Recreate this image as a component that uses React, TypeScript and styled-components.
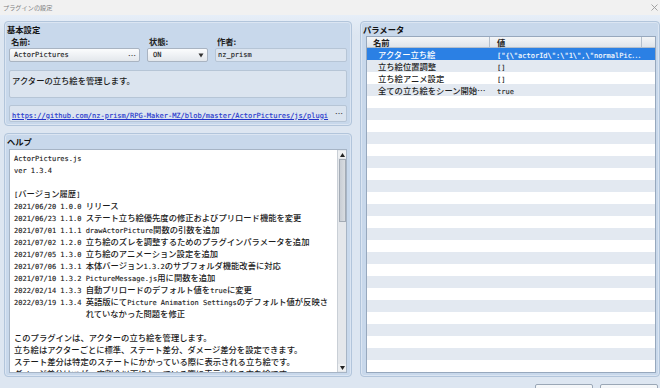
import React from "react";
import styled, { createGlobalStyle, css } from "styled-components";

const GlobalStyle = createGlobalStyle`
  html, body {
    margin: 0;
    padding: 0;
    background: #dde6f1;
  }
  body {
    font-family: "Noto Sans CJK JP", "DejaVu Sans", sans-serif;
    font-size: 8.3px;
    font-weight: 500;
    color: #1a1a1a;
  }
  * {
    box-sizing: border-box;
  }
`;

// 半角部分だけ等幅フォントにする
const LATIN = /([\x20-\x7e]+)/;

function Mixed({ text }: { text: string }) {
  const parts = text.split(LATIN);
  return (
    <>
      {parts.map((p, i) =>
        p === "" ? null : i % 2 === 1 ? (
          <Latin key={i}>{p}</Latin>
        ) : (
          <React.Fragment key={i}>{p}</React.Fragment>
        )
      )}
    </>
  );
}

const helpLines = [
  "ActorPictures.js",
  "ver 1.3.4",
  "",
  "[バージョン履歴]",
  "2021/06/20 1.0.0 リリース",
  "2021/06/23 1.1.0 ステート立ち絵優先度の修正およびプリロード機能を変更",
  "2021/07/01 1.1.1 drawActorPicture関数の引数を追加",
  "2021/07/02 1.2.0 立ち絵のズレを調整するためのプラグインパラメータを追加",
  "2021/07/05 1.3.0 立ち絵のアニメーション設定を追加",
  "2021/07/06 1.3.1 本体バージョン1.3.2のサブフォルダ機能改善に対応",
  "2021/07/10 1.3.2 PictureMessage.js用に関数を追加",
  "2022/02/14 1.3.3 自動プリロードのデフォルト値をtrueに変更",
  "2022/03/19 1.3.4 英語版にてPicture Animation Settingsのデフォルト値が反映さ",
  "                 れていなかった問題を修正",
  "",
  "このプラグインは、アクターの立ち絵を管理します。",
  "立ち絵はアクターごとに標準、ステート差分、ダメージ差分を設定できます。",
  "ステート差分は特定のステートにかかっている際に表示される立ち絵です。",
  "ダメージ差分はHPが一定割合以下になっている際に表示される立ち絵です。",
];

const params = [
  { name: "アクター立ち絵", value: String.raw`["{\"actorId\":\"1\",\"normalPic⋯` },
  { name: "立ち絵位置調整", value: "[]" },
  { name: "立ち絵アニメ設定", value: "[]" },
  { name: "全ての立ち絵をシーン開始⋯", value: "true" },
];

const ROWS = 27;

export default function App() {
  const rows = Array.from({ length: ROWS }, (_, i) => params[i]);
  return (
    <>
      <GlobalStyle />
      <Window>
        <TitleBar>
          <span>プラグインの設定</span>
          <svg width="7" height="7" viewBox="0 0 7 7">
            <path d="M0.5 0.5 L6.5 6.5 M6.5 0.5 L0.5 6.5" stroke="#9a9a9a" strokeWidth="0.9" />
          </svg>
        </TitleBar>
        <Body>
          <LeftColumn>
            <Panel>
              <Heading>基本設定</Heading>
              <Fields>
                <Field>
                  <Label>名前:</Label>
                  <ButtonBox>
                    <Latin>ActorPictures</Latin>
                    <Dots>⋯</Dots>
                  </ButtonBox>
                </Field>
                <Field>
                  <Label>状態:</Label>
                  <ButtonBox $select>
                    <Latin>ON</Latin>
                    <svg width="6" height="5" viewBox="0 0 6 5">
                      <path d="M0.5 0.5 H5.5 L3 4.5 Z" fill="#333" />
                    </svg>
                  </ButtonBox>
                </Field>
                <Field>
                  <Label>作者:</Label>
                  <ReadBox>
                    <Latin>nz_prism</Latin>
                  </ReadBox>
                </Field>
              </Fields>
              <Description>アクターの立ち絵を管理します。</Description>
              <UrlBox>
                <Link>
                  <Latin>https://github.com/nz-prism/RPG-Maker-MZ/blob/master/ActorPictures/js/plugi</Latin>
                </Link>
                <Dots>⋯</Dots>
              </UrlBox>
            </Panel>
            <Panel $grow>
              <Heading>ヘルプ</Heading>
              <HelpBox>
                <HelpText>
                  {helpLines.map((l, i) => (
                    <HelpLine key={i}>
                      <Mixed text={l} />
                    </HelpLine>
                  ))}
                </HelpText>
                <Scrollbar>
                  <ArrowButton>
                    <svg width="5" height="4" viewBox="0 0 5 4">
                      <path d="M2.5 0 L5 4 H0 Z" fill="#222" />
                    </svg>
                  </ArrowButton>
                  <Track>
                    <Thumb />
                  </Track>
                  <ArrowButton>
                    <svg width="5" height="4" viewBox="0 0 5 4">
                      <path d="M0 0 H5 L2.5 4 Z" fill="#222" />
                    </svg>
                  </ArrowButton>
                </Scrollbar>
              </HelpBox>
            </Panel>
          </LeftColumn>
          <RightPanel $grow>
            <Heading $right>パラメータ</Heading>
            <Table>
              <HeaderRow>
                <HeaderCell>名前</HeaderCell>
                <HeaderCell>値</HeaderCell>
                <HeaderCell />
              </HeaderRow>
              {rows.map((r, i) => (
                <Row key={i} $selected={i === 0} $odd={i % 2 === 1}>
                  <NameCell>{r ? r.name : ""}</NameCell>
                  <ValueCell>{r ? <Mixed text={r.value} /> : ""}</ValueCell>
                </Row>
              ))}
            </Table>
          </RightPanel>
        </Body>
        <Footer>
          <FooterButton>OK</FooterButton>
          <FooterButton>キャンセル</FooterButton>
        </Footer>
      </Window>
    </>
  );
}

const Window = styled.div`
  width: 660px;
  height: 388px;
  overflow: hidden;
  background: #dde6f1;
  display: flex;
  flex-direction: column;
`;

const TitleBar = styled.div`
  height: 15px;
  flex: none;
  display: flex;
  align-items: center;
  justify-content: space-between;
  padding: 0 2px 1px 3px;
  background: #f1f1f1;
  color: #808080;
  font-size: 6.2px;
  font-weight: 400;
`;

const Body = styled.div`
  height: 362px;
  flex: none;
  display: flex;
  gap: 8px;
  padding: 6px 0 0 4px;
  background: linear-gradient(#e6eef8, #dde6f1 20px);
`;

const LeftColumn = styled.div`
  width: 348px;
  display: flex;
  flex-direction: column;
  gap: 7px;
`;

const Panel = styled.div<{ $grow?: boolean }>`
  display: flex;
  flex-direction: column;
  padding: 1px 4px 3px 4px;
  background: #c8d8eb;
  border: 1px solid #b2c5db;
  border-radius: 4px;
  box-shadow: inset 0 0 0 1px rgba(255, 255, 255, 0.35);
  ${(p) =>
    p.$grow &&
    css`
      flex: 1;
      min-height: 0;
    `}
`;

const RightPanel = styled(Panel)`
  width: 297px;
  padding: 1px 3px 3px 5px;
`;

const Heading = styled.div<{ $right?: boolean }>`
  height: 12px;
  line-height: 12px;
  font-weight: 700;
  margin-left: ${(p) => (p.$right ? "-3px" : "-2px")};
  color: #111;
`;

const Fields = styled.div`
  display: grid;
  grid-template-columns: 131px 61px 132px;
  column-gap: 7px;
`;

const Field = styled.div`
  display: flex;
  flex-direction: column;
`;

const Label = styled.div`
  height: 13px;
  line-height: 13px;
  padding-left: 2px;
  font-weight: 700;
  color: #222;
`;

const ButtonBox = styled.div<{ $select?: boolean }>`
  height: 14px;
  display: flex;
  align-items: center;
  justify-content: space-between;
  padding: 0 ${(p) => (p.$select ? "3px 0 5px" : "3px 0 4px")};
  border: 1px solid #a9b4c2;
  border-radius: 2px;
  background: linear-gradient(#fbfcfd, #e3e7ec);
`;

const ReadBox = styled.div`
  height: 14px;
  display: flex;
  align-items: center;
  padding-left: 2px;
  border: 1px solid #b6c5d6;
  border-radius: 2px;
  background: #dbe4ef;
`;

const Description = styled(ReadBox)`
  height: 28px;
  margin-top: 8px;
  align-items: flex-start;
  padding: 3px 2px 0;
  line-height: 12px;
`;

const UrlBox = styled(ReadBox)`
  height: 17px;
  margin-top: 7px;
  padding-right: 3px;
  justify-content: space-between;
`;

const Link = styled.span`
  color: #2233cc;
  text-decoration: underline;
  white-space: nowrap;
`;

const Dots = styled.span`
  color: #333;
  font-size: 8px;
`;

const Latin = styled.span`
  font-family: "DejaVu Sans Mono", "Liberation Mono", monospace;
  font-size: 7px;
  white-space: pre;
  -webkit-text-stroke: 0.12px currentColor;
`;

const HelpBox = styled.div`
  flex: 1;
  min-height: 0;
  margin-top: 2px;
  display: flex;
  background: #fff;
  border: 1px solid #a6b4c5;
  overflow: hidden;
`;

const HelpText = styled.div`
  flex: 1;
  padding: 1px 4px;
  overflow: hidden;
`;

const HelpLine = styled.div`
  height: 12px;
  line-height: 12px;
  white-space: pre;
  color: #1a1a1a;
`;

const Scrollbar = styled.div`
  width: 9px;
  display: flex;
  flex-direction: column;
  padding: 1px 0;
  background: #e4e7eb;
  border-left: 1px solid #c9cfd6;
`;

const ArrowButton = styled.div`
  height: 7px;
  display: flex;
  align-items: center;
  justify-content: center;
  background: #eef0f2;
`;

const Track = styled.div`
  flex: 1;
  padding-top: 1px;
`;

const Thumb = styled.div`
  height: 63px;
  margin: 0 0.5px;
  background: linear-gradient(90deg, #c9ced5, #d8dce1);
  border: 1px solid #a3abb5;
`;

const Table = styled.div`
  flex: 1;
  min-height: 0;
  margin-top: 1px;
  display: flex;
  flex-direction: column;
  background: #fff;
  border: 1px solid #97a8bd;
  overflow: hidden;
`;

const HeaderRow = styled.div`
  height: 11px;
  flex: none;
  display: grid;
  grid-template-columns: 123px 152px 1fr;
  background: linear-gradient(#f4f6f8, #dfe4ea);
  border-bottom: 1px solid #b4bfcc;
`;

const HeaderCell = styled.div`
  line-height: 10px;
  padding-left: 6px;
  font-weight: 700;
  color: #222;
  border-right: 1px solid #b4bfcc;
  &:nth-child(2) {
    padding-left: 7px;
  }
  &:last-child {
    border-right: none;
  }
`;

const Row = styled.div<{ $selected?: boolean; $odd?: boolean }>`
  height: 12px;
  flex: none;
  display: grid;
  grid-template-columns: 123px 1fr;
  line-height: 12px;
  white-space: nowrap;
  color: #1e1e1e;
  background: ${(p) => (p.$odd ? "#e3e9f1" : "#fff")};
  ${(p) =>
    p.$selected &&
    css`
      background: #2b80e4;
      color: #fff;
    `}
`;

const NameCell = styled.div`
  padding-left: 11px;
  overflow: hidden;
`;

const ValueCell = styled.div`
  padding-left: 7px;
  overflow: hidden;
`;

const Footer = styled.div`
  display: flex;
  justify-content: flex-end;
  gap: 7px;
  margin-top: 7px;
  padding-right: 2px;
`;

const FooterButton = styled.div`
  width: 58px;
  height: 18px;
  padding-top: 2px;
  text-align: center;
  line-height: 12px;
  color: #555;
  border: 1px solid #9aa7b6;
  border-radius: 2px;
  background: linear-gradient(#f6f8fa, #e2e6ec);
`;
